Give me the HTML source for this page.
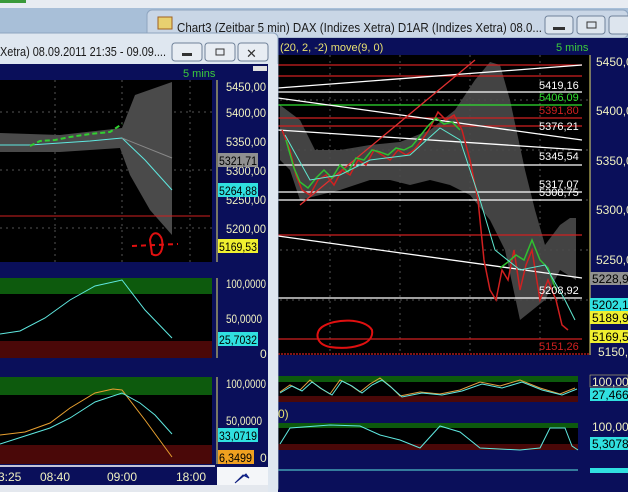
<!DOCTYPE html>
<html><head><meta charset="utf-8"><style>
html,body{margin:0;padding:0;background:#d9dee6;width:628px;height:492px;overflow:hidden}
svg{display:block}
text{font-family:"Liberation Sans",sans-serif}
</style></head><body>
<svg width="628" height="492" xmlns="http://www.w3.org/2000/svg" font-family="Liberation Sans, sans-serif">
<rect x="0" y="0" width="628" height="8" fill="#e8ecf2"/>
<rect x="0" y="0" width="26" height="3" fill="#3a9a3a"/>
<rect x="0" y="8" width="628" height="484" fill="#a8bfd8"/>
<!-- right window title -->
<rect x="147" y="10" width="481" height="28" rx="5" fill="#c9d6e6" stroke="#8ea4bf"/>
<rect x="158" y="17" width="14" height="12" fill="#e8d070" stroke="#a06020"/>
<text x="177" y="32" font-size="12.5" fill="#1a1a1a" textLength="365" lengthAdjust="spacingAndGlyphs">Chart3 (Zeitbar 5 min)  DAX (Indizes Xetra) D1AR (Indizes Xetra) 08.0...</text>
<rect x="545" y="16" width="28" height="18" rx="3" fill="#dde5ee" stroke="#6f8199"/>
<rect x="577" y="16" width="28" height="18" rx="3" fill="#dde5ee" stroke="#6f8199"/>
<rect x="609" y="16" width="28" height="18" rx="3" fill="#dde5ee" stroke="#6f8199"/>
<rect x="553" y="27" width="12" height="3" fill="#333"/>
<rect x="587" y="22" width="9" height="6" fill="none" stroke="#333"/>
<!-- right window content -->
<rect x="278" y="38" width="350" height="454" fill="#0a0f5a"/>
<text x="280" y="51" font-size="11" fill="#e8e070">(20, 2, -2) move(9, 0)</text>
<text x="556" y="51" font-size="11" fill="#3ccc3c">5 mins</text>
<rect x="278" y="55" width="312" height="300" fill="#000"/>
<g stroke="#555" stroke-dasharray="2,4" stroke-width="1">
<line x1="280" y1="100" x2="590" y2="100"/><line x1="280" y1="150" x2="590" y2="150"/><line x1="280" y1="200" x2="590" y2="200"/><line x1="280" y1="250" x2="590" y2="250"/><line x1="280" y1="300" x2="590" y2="300"/>
<line x1="330" y1="55" x2="330" y2="355"/><line x1="400" y1="55" x2="400" y2="355"/><line x1="470" y1="55" x2="470" y2="355"/><line x1="540" y1="55" x2="540" y2="355"/>
</g>
<path d="M280 105 L300 120 L315 150 L340 150 L370 145 L400 142 L430 130 L455 110 L475 80 L490 62 L500 65 L510 100 L525 170 L535 210 L545 245 L560 225 L570 218 L576 218 L576 280 L560 270 L545 300 L520 320 L505 250 L490 220 L470 195 L450 185 L430 180 L410 185 L390 180 L370 180 L340 190 L320 195 L300 200 L290 170 L280 160 Z" fill="#4a4a4a" opacity="0.9"/>
<g stroke-width="1.3">
<line x1="278" y1="65" x2="582" y2="65" stroke="#d02020"/>
<line x1="278" y1="76" x2="582" y2="76" stroke="#d02020"/>
<line x1="278" y1="92" x2="582" y2="92" stroke="#fff"/>
<line x1="278" y1="105" x2="582" y2="105" stroke="#30e030"/>
<line x1="278" y1="118" x2="582" y2="118" stroke="#d02020"/>
<line x1="278" y1="126" x2="582" y2="126" stroke="#d02020"/>
<line x1="278" y1="165" x2="582" y2="165" stroke="#fff"/>
<line x1="278" y1="192" x2="582" y2="192" stroke="#fff"/>
<line x1="278" y1="200" x2="582" y2="200" stroke="#fff"/>
<line x1="278" y1="235" x2="582" y2="235" stroke="#d02020"/>
<line x1="278" y1="298" x2="582" y2="298" stroke="#fff"/>
<line x1="278" y1="339" x2="582" y2="339" stroke="#d02020"/>
<line x1="278" y1="354" x2="590" y2="354" stroke="#d02020" stroke-dasharray="2,1"/>
<line x1="278" y1="88" x2="582" y2="65" stroke="#fff"/>
<line x1="278" y1="98" x2="582" y2="140" stroke="#fff"/>
<line x1="278" y1="130" x2="582" y2="150" stroke="#fff"/>
<line x1="278" y1="236" x2="582" y2="278" stroke="#fff"/>
<line x1="300" y1="205" x2="475" y2="60" stroke="#e03030"/>
</g>
<g stroke-width="1.5">
<polyline points="282,130 290,150 296,175 302,190 310,195 318,180 326,175 334,185 342,170 350,175 358,160 366,165 374,150 382,155 390,160 398,150 406,155 414,150 422,140 430,128 438,112 446,120 454,115 462,130 470,160 478,200 484,260 490,290 496,300 502,270 508,280 514,250 520,290 526,265 532,250 540,300 548,280 556,300 562,325 568,330" fill="none" stroke="#d02020"/>
<polyline points="286,140 294,168 300,182 308,188 316,178 324,170 332,178 340,165 348,172 356,158 364,160 372,150 380,152 388,155 396,148 404,150 412,146 420,136 428,126 436,118 444,124 452,122 460,130" fill="none" stroke="#30c030"/>
<polyline points="500,268 508,262 516,255 524,260 532,240 540,260 548,268 556,290" fill="none" stroke="#30c030"/>
</g>
<polyline points="285,135 310,180 340,175 370,160 410,155 440,128 460,140 480,200 495,250 520,270 545,265 565,300 575,320" fill="none" stroke="#5fe8d0" stroke-width="1"/>
<g font-size="11">
<text x="539" y="89" fill="#fff">5419,16</text>
<text x="539" y="101" fill="#30e030">5406,09</text>
<text x="539" y="114" fill="#d02020">5391,80</text>
<text x="539" y="130" fill="#fff">5376,21</text>
<text x="539" y="160" fill="#fff">5345,54</text>
<text x="539" y="188" fill="#fff">5317,07</text>
<text x="539" y="196" fill="#fff">5308,75</text>
<text x="539" y="294" fill="#fff">5208,92</text>
<text x="539" y="350" fill="#d02020">5151,26</text>
</g>
<path d="M322 327 C335 318 365 318 372 330 C375 345 350 350 330 347 C315 344 315 332 322 327Z" fill="none" stroke="#e01010" stroke-width="2"/>
<line x1="590" y1="55" x2="590" y2="355" stroke="#e8e070"/>
<g font-size="12" fill="#f0f0c0">
<text x="596" y="66">5450,00</text><text x="596" y="115">5400,00</text><text x="596" y="165">5350,00</text><text x="596" y="214">5300,00</text><text x="596" y="264">5250,00</text><text x="598" y="356">5150,00</text>
</g>
<rect x="590" y="272" width="38" height="13" fill="#909090"/><text x="592" y="283" font-size="12" fill="#000">5228,90</text>
<rect x="590" y="298" width="38" height="13" fill="#30e0e0"/><text x="592" y="309" font-size="12" fill="#000">5202,13</text>
<rect x="590" y="311" width="38" height="13" fill="#f0f030"/><text x="592" y="322" font-size="12" fill="#000">5189,93</text>
<rect x="590" y="330" width="38" height="13" fill="#f0f030"/><text x="592" y="341" font-size="12" fill="#000">5169,53</text>
<!-- right indicators -->
<rect x="278" y="376" width="300" height="26" fill="#000"/>
<rect x="278" y="376" width="300" height="6" fill="#0d5a0d"/>
<rect x="278" y="396" width="300" height="6" fill="#4a0808"/>
<polyline points="280,392 290,385 300,390 310,380 320,388 330,394 340,380 350,385 360,392 370,384 380,378 390,386 400,396 420,392 440,394 460,390 480,382 500,386 520,380 540,388 560,394 575,388" fill="none" stroke="#e0a040"/>
<polyline points="280,393 292,386 302,391 312,382 322,389 332,395 342,381 352,386 362,393 372,385 382,380 392,388 402,397 422,393 442,395 462,391 482,384 502,388 522,382 542,390 562,395 577,389" fill="none" stroke="#5fe8e0"/>
<text x="278" y="418" font-size="12" fill="#e8e070">0)</text>
<rect x="278" y="423" width="300" height="27" fill="#000"/>
<rect x="278" y="423" width="300" height="5" fill="#0d5a0d"/>
<rect x="278" y="444" width="300" height="6" fill="#4a0808"/>
<polyline points="280,444 290,428 330,425 360,426 380,435 400,440 420,448 440,426 460,432 480,448 520,450 540,448 550,428 565,428 572,446 578,450" fill="none" stroke="#5fe8e0"/>
<line x1="278" y1="470" x2="578" y2="470" stroke="#5fe8e0"/>
<rect x="590" y="375" width="38" height="12" fill="#0a0f5a" stroke="#e8e070" stroke-width="0.5"/>
<text x="592" y="386" font-size="12" fill="#f0f0c0">100,000</text>
<rect x="590" y="388" width="38" height="13" fill="#30e0e0"/><text x="592" y="399" font-size="12" fill="#000">27,4661</text>
<text x="592" y="431" font-size="12" fill="#f0f0c0">100,000</text>
<rect x="590" y="437" width="38" height="13" fill="#30e0e0"/><text x="592" y="448" font-size="12" fill="#000">5,3078</text>
<rect x="590" y="468" width="38" height="5" fill="#30e0e0"/>

<!-- LEFT WINDOW -->
<rect x="-5" y="33" width="283" height="460" rx="5" fill="#dfe7f0" stroke="#8ea4bf"/>
<text x="0" y="56" font-size="12.5" fill="#1a1a1a" textLength="166" lengthAdjust="spacingAndGlyphs">Xetra) 08.09.2011 21:35 - 09.09....</text>
<rect x="172" y="43" width="30" height="18" rx="3" fill="#e8edf3" stroke="#6f8199"/>
<rect x="205" y="43" width="30" height="18" rx="3" fill="#e8edf3" stroke="#6f8199"/>
<rect x="238" y="43" width="30" height="18" rx="3" fill="#e8edf3" stroke="#6f8199"/>
<rect x="182" y="53" width="10" height="3" fill="#333"/>
<rect x="216" y="49" width="8" height="6" fill="none" stroke="#333"/>
<text x="246" y="58" font-size="13" fill="#333">✕</text>
<rect x="0" y="64" width="268" height="421" fill="#0a0f5a"/>
<text x="183" y="77" font-size="11" fill="#3ccc3c">5 mins</text>
<rect x="253" y="66" width="14" height="5" fill="#e0e0e0"/>
<rect x="0" y="80" width="212" height="182" fill="#000"/>
<g stroke="#555" stroke-dasharray="2,4">
<line x1="0" y1="112" x2="212" y2="112"/><line x1="0" y1="170" x2="212" y2="170"/><line x1="0" y1="228" x2="212" y2="228"/>
<line x1="55" y1="80" x2="55" y2="262"/><line x1="122" y1="80" x2="122" y2="262"/><line x1="190" y1="80" x2="190" y2="262"/>
</g>
<path d="M0 133 L60 135 L122 128 L135 95 L172 82 L172 235 L150 210 L130 175 L120 148 L60 152 L0 152Z" fill="#4a4a4a"/>
<line x1="0" y1="216" x2="210" y2="216" stroke="#d02020"/>
<polyline points="0,145 30,145 60,143 90,141 122,138 145,160 172,190" fill="none" stroke="#5fe8e0"/>
<line x1="122" y1="138" x2="172" y2="158" stroke="#888"/>
<polyline points="30,146 40,141 55,140 70,137 90,134 110,132 122,124" fill="none" stroke="#30d030" stroke-width="2" stroke-dasharray="5,3"/>
<path d="M150 240 C152 230 160 232 162 240 C164 252 158 258 152 254Z" fill="none" stroke="#e01010" stroke-width="2"/>
<line x1="132" y1="246" x2="178" y2="244" stroke="#e01010" stroke-width="2" stroke-dasharray="5,4"/>
<line x1="217" y1="80" x2="217" y2="262" stroke="#e8e070"/>
<g font-size="12" fill="#f0f0c0">
<text x="226" y="91" textLength="40" lengthAdjust="spacingAndGlyphs">5450,00</text><text x="226" y="117" textLength="40" lengthAdjust="spacingAndGlyphs">5400,00</text><text x="226" y="146" textLength="40" lengthAdjust="spacingAndGlyphs">5350,00</text><text x="226" y="175" textLength="40" lengthAdjust="spacingAndGlyphs">5300,00</text><text x="226" y="204" textLength="40" lengthAdjust="spacingAndGlyphs">5250,00</text><text x="226" y="233" textLength="40" lengthAdjust="spacingAndGlyphs">5200,00</text>
</g>
<rect x="218" y="153" width="40" height="14" fill="#909090"/><text x="219" y="165" font-size="12" fill="#000" textLength="38" lengthAdjust="spacingAndGlyphs">5321,71</text>
<rect x="218" y="183" width="40" height="14" fill="#30e0e0"/><text x="219" y="195" font-size="12" fill="#000" textLength="38" lengthAdjust="spacingAndGlyphs">5264,88</text>
<rect x="218" y="239" width="40" height="14" fill="#f0f030"/><text x="219" y="251" font-size="12" fill="#000" textLength="38" lengthAdjust="spacingAndGlyphs">5169,53</text>
<rect x="0" y="278" width="212" height="80" fill="#000"/>
<rect x="0" y="278" width="212" height="16" fill="#0d5a0d"/>
<rect x="0" y="341" width="212" height="17" fill="#4a0808"/>
<polyline points="0,334 20,331 45,318 70,300 95,286 122,280 145,310 172,338" fill="none" stroke="#5fe8e0"/>
<line x1="217" y1="278" x2="217" y2="358" stroke="#e8e070"/>
<text x="226" y="288" font-size="12" fill="#f0f0c0" textLength="40" lengthAdjust="spacingAndGlyphs">100,0000</text>
<text x="226" y="323" font-size="12" fill="#f0f0c0" textLength="36" lengthAdjust="spacingAndGlyphs">50,0000</text>
<rect x="218" y="332" width="40" height="14" fill="#30e0e0"/><text x="219" y="344" font-size="12" fill="#000" textLength="38" lengthAdjust="spacingAndGlyphs">25,7032</text>
<text x="260" y="358" font-size="12" fill="#f0f0c0">0</text>
<rect x="0" y="377" width="212" height="87" fill="#000"/>
<rect x="0" y="377" width="212" height="18" fill="#0d5a0d"/>
<rect x="0" y="445" width="212" height="19" fill="#4a0808"/>
<polyline points="0,435 25,432 50,423 70,408 95,393 113,389 122,390 145,420 172,457" fill="none" stroke="#e8a030"/>
<polyline points="0,444 25,436 50,428 70,418 95,402 122,393 140,403 155,415 172,434" fill="none" stroke="#5fe8e0"/>
<line x1="217" y1="377" x2="217" y2="464" stroke="#e8e070"/>
<text x="226" y="388" font-size="12" fill="#f0f0c0" textLength="40" lengthAdjust="spacingAndGlyphs">100,0000</text>
<text x="226" y="425" font-size="12" fill="#f0f0c0" textLength="36" lengthAdjust="spacingAndGlyphs">50,0000</text>
<rect x="218" y="428" width="40" height="14" fill="#30e0e0"/><text x="219" y="440" font-size="12" fill="#000" textLength="38" lengthAdjust="spacingAndGlyphs">33,0719</text>
<rect x="218" y="450" width="36" height="14" fill="#f0a020"/><text x="219" y="462" font-size="12" fill="#000" textLength="33" lengthAdjust="spacingAndGlyphs">6,3499</text>
<text x="260" y="462" font-size="12" fill="#f0f0c0">0</text>
<line x1="0" y1="466" x2="215" y2="466" stroke="#fff" stroke-width="1.5"/>
<g font-size="12" fill="#f0f0c0">
<text x="-2" y="481">3:25</text><text x="40" y="481">08:40</text><text x="107" y="481">09:00</text><text x="176" y="481">18:00</text>
</g>
<rect x="217" y="467" width="51" height="18" fill="#f4f6f9"/>
<path d="M235 483 L243 475 L249 478 L246 474 Z" fill="#1030c0" stroke="#102080"/>
<rect x="0" y="485" width="268" height="7" fill="#e4e8ee"/>
<rect x="268" y="64" width="10" height="428" fill="#dfe7f0"/>
</svg>
</body></html>
